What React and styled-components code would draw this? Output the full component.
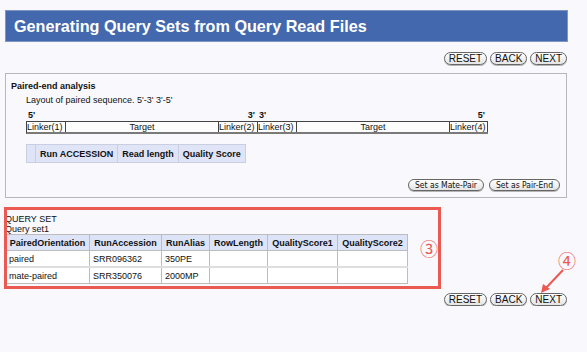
import React from "react";
import styled, { createGlobalStyle } from "styled-components";

const Global = createGlobalStyle`
  html, body {
    margin: 0;
    padding: 0;
    background: #f8f8fd;
  }
  body {
    font-family: "Liberation Sans", Arial, sans-serif;
    font-size: 9px;
    color: #111;
  }
`;

const Page = styled.div`
  position: relative;
  width: 562px;
  padding: 10px 0 0 5px;
`;

const Header = styled.div`
  height: 32px;
  width: 563px;
  box-sizing: border-box;
  background: #4468ad;
  border: 1px solid #7f95c4;
  display: flex;
  align-items: center;
  padding-left: 8px;
  h1 {
    margin: 0;
    font-size: 16.2px;
    font-weight: bold;
    color: #fff;
  }
`;

const NavRow = styled.div`
  display: flex;
  justify-content: flex-end;
  gap: 3px;
  margin-top: ${(p) => p.$top}px;
`;

const Pill = styled.button`
  height: ${(p) => p.$h || 13}px;
  padding: 0 ${(p) => (p.$soft ? 6 : 4)}px;
  border: 1px solid #666;
  border-radius: 7px;
  background: linear-gradient(#ffffff, #e4e4e4);
  box-shadow: 0 1px 0 #b5b5b5;
  font-family: ${(p) =>
    p.$soft ? '"DejaVu Sans Condensed", "DejaVu Sans", sans-serif' : '"Liberation Sans", Arial, sans-serif'};
  font-size: ${(p) => (p.$soft ? 8.5 : 10)}px;
  line-height: 1;
  color: #111;
  cursor: pointer;
`;

const Panel = styled.div`
  margin-top: 8px;
  height: 125px;
  box-sizing: border-box;
  border: 1px solid #b8b8b8;
  padding: 7px 6px 0 5px;
  display: flex;
  flex-direction: column;
`;

const PanelTitle = styled.div`
  font-weight: bold;
  line-height: 11px;
`;

const Indent = styled.div`
  margin-left: 15px;
  margin-top: ${(p) => p.$top || 0}px;
  line-height: 11px;
`;

const seqCols = "39px 153px 39px 39px 153px 38px";

const Markers = styled.div`
  display: grid;
  grid-template-columns: ${seqCols};
  font-weight: bold;
  line-height: 11px;
  span { padding: 0 2px; }
  .r { text-align: right; }
`;

const SeqRow = styled.div`
  display: grid;
  grid-template-columns: ${seqCols};
  width: 461px;
  border-top: 1px solid #444;
  border-left: 1px solid #444;
  border-bottom: 2px solid #7a7a7a;
  background: #fdfdfd;
  line-height: 10px;
`;

const SeqCell = styled.div`
  border-right: 1px solid #444;
  text-align: ${(p) => (p.$wide ? "center" : "left")};
  white-space: nowrap;
  overflow: hidden;
`;

const RunTable = styled.table`
  align-self: flex-start;
  margin: 10px 0 0 15px;
  border-collapse: collapse;
  border: 1px solid #cdd2e4;
  th {
    background: #dfe4f6;
    border: 1px solid #c9cee0;
    height: 17px;
    padding: 0 4px;
    font-weight: bold;
    white-space: nowrap;
  }
  th.blank { width: 0; padding: 0 4px; }
`;

const PanelActions = styled.div`
  display: flex;
  justify-content: flex-end;
  gap: 5px;
  margin-top: auto;
  margin-bottom: 6px;
`;

const QuerySection = styled.div`
  margin-top: 16px;
  line-height: 10px;
`;

const QueryTable = styled.table`
  border-collapse: collapse;
  width: 402px;
  table-layout: fixed;
  border: 1px solid #a9a9a9;
  th, td {
    border: 1px solid #bcbcbc;
    height: 15px;
    padding: 0 3px;
    white-space: nowrap;
  }
  th {
    background: #dee4f7;
    font-weight: bold;
    text-align: center;
  }
  td { background: #fff; }
  tbody tr + tr td { border-top: 2px solid #dedede; }
`;

const Frame = styled.div`
  position: absolute;
  left: 4px;
  top: 207px;
  width: 437px;
  height: 82px;
  box-sizing: border-box;
  border: 3px solid #ea5a52;
  pointer-events: none;
`;

const Marker = styled.span`
  position: absolute;
  left: ${(p) => p.$x}px;
  top: ${(p) => p.$y}px;
  font-family: "Noto Sans CJK JP", sans-serif;
  font-size: 18px;
  line-height: 18px;
  color: #ea5a52;
`;

const Arrow = styled.svg`
  position: absolute;
  left: 530px;
  top: 262px;
`;

const cols = [84, 72, 48, 58, 70, 70];
const heads = ["PairedOrientation", "RunAccession", "RunAlias", "RowLength", "QualityScore1", "QualityScore2"];
const rows = [
  ["paired", "SRR096362", "350PE", "", "", ""],
  ["mate-paired", "SRR350076", "2000MP", "", "", ""],
];

const Nav = ({ top }) => (
  <NavRow $top={top}>
    <Pill>RESET</Pill>
    <Pill>BACK</Pill>
    <Pill>NEXT</Pill>
  </NavRow>
);

export default function App() {
  return (
    <Page>
      <Global />
      <Header>
        <h1>Generating Query Sets from Query Read Files</h1>
      </Header>
      <Nav top={10} />

      <Panel>
        <PanelTitle>Paired-end analysis</PanelTitle>
        <Indent $top={3}>Layout of paired sequence. 5'-3' 3'-5'</Indent>
        <Indent $top={4}>
          <Markers>
            <span>5'</span>
            <span />
            <span className="r">3'</span>
            <span>3'</span>
            <span />
            <span className="r">5'</span>
          </Markers>
          <SeqRow>
            <SeqCell>Linker(1)</SeqCell>
            <SeqCell $wide>Target</SeqCell>
            <SeqCell>Linker(2)</SeqCell>
            <SeqCell>Linker(3)</SeqCell>
            <SeqCell $wide>Target</SeqCell>
            <SeqCell>Linker(4)</SeqCell>
          </SeqRow>
        </Indent>
        <RunTable>
          <thead>
            <tr>
              <th className="blank" />
              <th>Run ACCESSION</th>
              <th>Read length</th>
              <th>Quality Score</th>
            </tr>
          </thead>
        </RunTable>
        <PanelActions>
          <Pill $soft $h={12}>Set as Mate-Pair</Pill>
          <Pill $soft $h={12}>Set as Pair-End</Pill>
        </PanelActions>
      </Panel>

      <QuerySection>
        <div>QUERY SET</div>
        <div>Query set1</div>
        <QueryTable>
          <colgroup>
            {cols.map((w, i) => (
              <col key={i} style={{ width: w }} />
            ))}
          </colgroup>
          <thead>
            <tr>
              {heads.map((h) => (
                <th key={h}>{h}</th>
              ))}
            </tr>
          </thead>
          <tbody>
            {rows.map((r, i) => (
              <tr key={i}>
                {r.map((c, j) => (
                  <td key={j}>{c}</td>
                ))}
              </tr>
            ))}
          </tbody>
        </QueryTable>
      </QuerySection>

      <Nav top={9} />

      <Frame />
      <Marker $x={420} $y={239}>③</Marker>
      <Marker $x={558} $y={251}>④</Marker>
      <Arrow width="40" height="34" viewBox="0 0 40 34">
        <line x1="33" y1="8" x2="15" y2="27" stroke="#ea5a52" strokeWidth="2" />
        <polygon points="11,31 13,22 20,27" fill="#ea5a52" />
      </Arrow>
    </Page>
  );
}
